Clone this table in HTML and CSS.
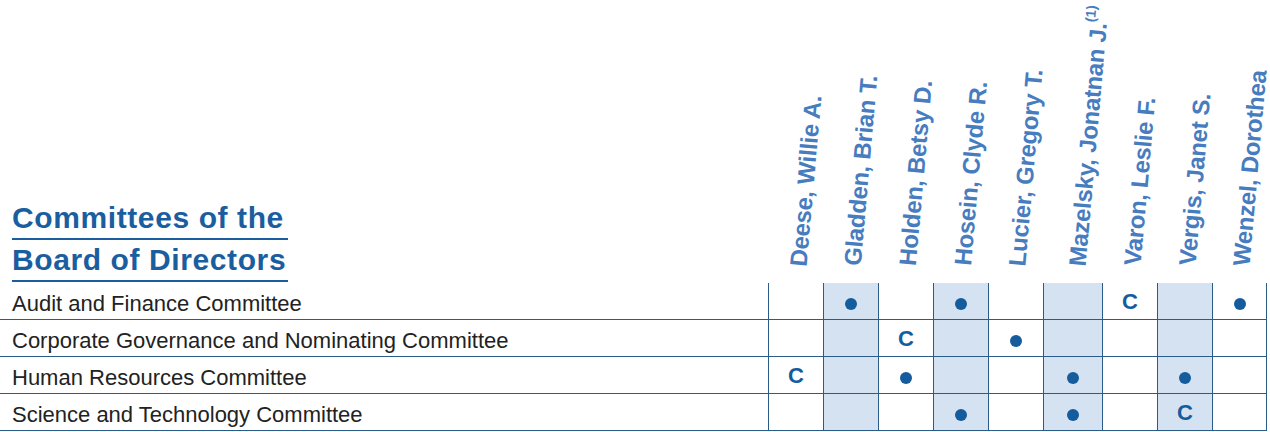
FILE: index.html
```html
<!DOCTYPE html>
<html lang="en">
<head>
    <meta charset="UTF-8">
    <meta name="viewport" content="width=device-width, initial-scale=1.0">
    <title>Committees of the Board of Directors</title>
    <link rel="stylesheet" href="styles.css">
</head>
<body>

<div class="matrix" id="matrix">
    <div class="title">
        <div class="title-line">Committees of the</div>
        <div class="title-line">Board of Directors</div>
    </div>
    <div class="name"><span>Deese, Willie A.</span></div>
    <div class="name"><span>Gladden, Brian T.</span></div>
    <div class="name"><span>Holden, Betsy D.</span></div>
    <div class="name"><span>Hosein, Clyde R.</span></div>
    <div class="name"><span>Lucier, Gregory T.</span></div>
    <div class="name"><span>Mazelsky, Jonatnan J.<sup>(1)</sup></span></div>
    <div class="name"><span>Varon, Leslie F.</span></div>
    <div class="name"><span>Vergis, Janet S.</span></div>
    <div class="name"><span>Wenzel, Dorothea</span></div>
</div>

<script>
    // d = member, c = chair, '' = not on the committee
    const committees = [
        { name: "Audit and Finance Committee", seats: ["", "d", "", "d", "", "", "c", "", "d"] },
        { name: "Corporate Governance and Nominating Committee", seats: ["", "", "c", "", "d", "", "", "", ""] },
        { name: "Human Resources Committee", seats: ["c", "", "d", "", "", "d", "", "d", ""] },
        { name: "Science and Technology Committee", seats: ["", "", "", "d", "", "d", "", "c", ""] }
    ];

    const matrix = document.getElementById('matrix');

    committees.forEach(row => {
        let html = `<div class="label">${row.name}</div>`;
        row.seats.forEach((seat, j) => {
            let cls = 'cell';
            if (j % 2 === 1) cls += ' shade';
            if (j === row.seats.length - 1) cls += ' last';
            let mark = '';
            if (seat === 'd') mark = '<span class="dot"></span>';
            if (seat === 'c') mark = '<span class="chair">C</span>';
            html += `<div class="${cls}">${mark}</div>`;
        });
        matrix.innerHTML += html;
    });
</script>
</body>
</html>
```

FILE: styles.css
```css
:root { --line: #2b5b87; --heading: #1b5e9f; --name: #477cbf; --mark: #155c9d; --shade: #d5e2f2; }
body { margin: 0; background: #fff; font-family: "Liberation Sans", Arial, sans-serif; }

/* Grid */
.matrix { display: grid; grid-template-columns: 768px repeat(9, 1fr); grid-template-rows: 283px; width: 1267px; }

/* Heading */
.title { box-sizing: border-box; padding: 0 0 1px 12px; display: flex; flex-direction: column; justify-content: flex-end; }
.title-line { width: 276px; font-size: 30px; font-weight: bold; letter-spacing: 0.6px; line-height: 40px; color: var(--heading); border-bottom: 2px solid var(--heading); white-space: nowrap; }

/* Director names */
.name { display: flex; align-items: flex-end; padding: 0 0 17px 24px; min-height: 0; }
.name span { writing-mode: vertical-rl; transform: rotate(185deg); font-size: 24px; font-weight: bold; letter-spacing: -0.3px; line-height: 27px; color: var(--name); white-space: nowrap; }
.name sup { font-size: 14px; letter-spacing: 0; margin-left: 3px; }

/* Rows */
.label, .cell { height: 37px; box-sizing: border-box; border-bottom: 1px solid var(--line); padding-top: 6px; display: flex; align-items: center; }
.label { font-size: 22px; color: #222; padding-left: 12px; white-space: nowrap; }
.cell { border-left: 1px solid var(--line); justify-content: center; }
.cell.last { border-right: 1px solid var(--line); }
.cell.shade { background: var(--shade); }

/* Marks */
.dot { width: 12px; height: 12px; border-radius: 50%; background: var(--mark); }
.chair { font-size: 22px; font-weight: bold; color: var(--mark); margin-bottom: 4px; }
```
